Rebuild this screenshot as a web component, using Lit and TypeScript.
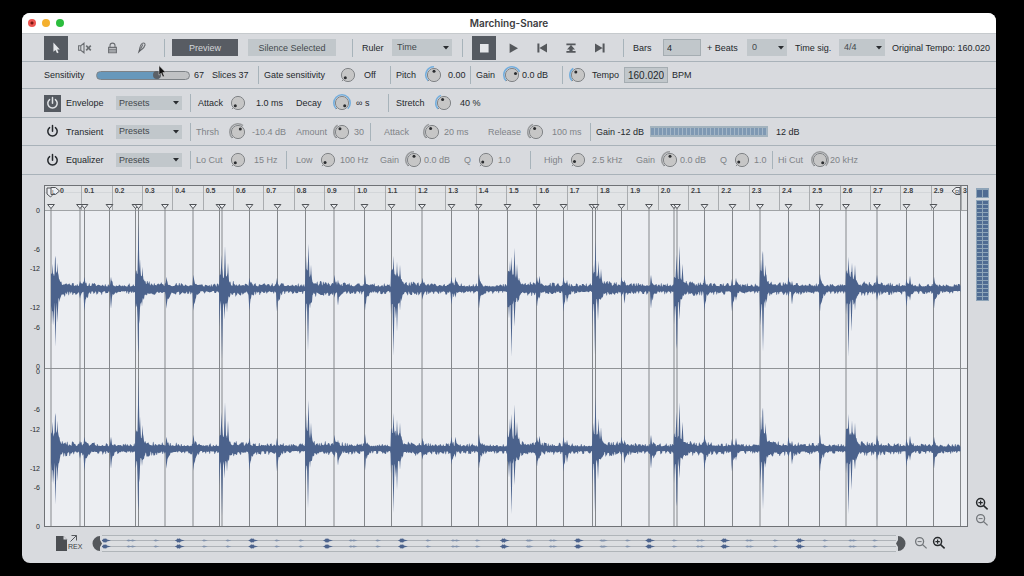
import { LitElement, html, svg, css, unsafeCSS } from "lit";
import { customElement } from "lit/decorators.js";

/* ---------- slice markers and audio shape ---------- */

const SLICES = [
  51, 80, 84.5, 109.5, 135.5, 138.5, 165, 193, 219.5, 222, 249.5, 277.5, 305.5, 334, 364.5, 391.5, 422, 451.5, 478.5,
  507.5, 536.5, 563.5, 592.5, 595.5, 621.5, 649, 674, 677, 704.5, 732.5, 760, 788.5, 819.5, 846, 877, 906.5, 933.5,
];
const SONG_START = 51;
const SONG_END = 960.5;

type Spike = [number, number];
interface Hit {
  at: number;
  len: number;
  body: number;
  up: Spike[];
  down: Spike[];
}

const HITS: Hit[] = [
  { at: 51, len: 9, body: 22, up: [[52.5, 25], [55.3, 39], [57.5, 26]], down: [[52, 36], [53.5, 37], [55.5, 58], [57.5, 34]] },
  { at: 135.5, len: 9, body: 19, up: [[136, 18], [138.5, 66], [140, 30], [142.5, 22]], down: [[135.5, 20], [138.3, 76], [139.5, 31], [142, 18]] },
  { at: 219.5, len: 10, body: 19, up: [[221.5, 34], [225, 43], [228, 26]], down: [[219.5, 38], [222, 70], [224.5, 31], [227, 24]] },
  { at: 305.2, len: 7, body: 21, up: [[306, 33], [308.5, 45], [311, 24]], down: [[305.5, 38], [308, 62], [310, 20]] },
  { at: 391, len: 11, body: 21, up: [[393.5, 33], [397, 27], [400, 24]], down: [[391, 26], [393.5, 67], [395.5, 30], [397, 43], [400, 22]] },
  { at: 507.5, len: 12, body: 19, up: [[510, 28], [511.5, 32], [514.5, 41], [517, 25]], down: [[509, 30], [511.5, 68], [514.5, 38]] },
  { at: 592.5, len: 10, body: 20, up: [[593, 24], [595.5, 48], [598.5, 28], [601, 20]], down: [[592.5, 38], [595, 66], [598, 32]] },
  { at: 674, len: 9, body: 19, up: [[676.5, 34], [679.5, 43], [682.5, 25]], down: [[674, 36], [676.8, 71], [679.5, 31]] },
  { at: 760, len: 7, body: 21, up: [[761, 30], [762.8, 45], [765.5, 24]], down: [[760.5, 37], [763, 63], [765, 20]] },
  { at: 846, len: 11, body: 21, up: [[848.5, 32], [852, 26], [855, 24]], down: [[846, 26], [848.5, 68], [851.5, 43], [855, 22]] },
];

const TAPS: [number, number, number][] = [
  [80, 8, 10], [84.5, 12, 22], [111, 12, 20], [166.5, 12, 20], [193.5, 14, 22], [249.5, 11, 22], [277, 11, 23],
  [334.5, 14, 9], [338, 9, 17], [365, 15, 22], [422.5, 11, 11], [451.5, 12, 16], [455.5, 12, 9], [479, 15, 20],
  [537, 12, 18], [539.5, 13, 10], [563.5, 12, 23], [567, 9, 14], [621.5, 12, 8], [624.5, 9, 15], [651, 14, 20],
  [704.5, 14, 22], [732, 10, 23], [736, 11, 12], [788.5, 12, 8], [792, 8, 16], [820, 15, 23], [877, 14, 12],
  [906.5, 10, 18], [910, 13, 12], [934, 12, 20],
];

function makeNoise(seed: number) {
  let s = seed;
  return () => {
    s = (s * 1664525 + 1013904223) % 4294967296;
    return s / 4294967296;
  };
}

function wavePath(mid: number, seed: number, upGain: number, downGain: number) {
  const rand = makeNoise(seed);
  let held = 0.5;
  const height = (x: number, side: "up" | "down") => {
    if (x % 1 === 0) held = rand();
    const n = held;
    let last = HITS[0];
    for (const h of HITS) if (h.at <= x) last = h;
    const since = x - last.at;
    let a = 2.1 + n * n * 2.6 + 3.2 * Math.exp(-since / 40) * (0.4 + n);
    if (since >= 0 && since <= last.len + 4) {
      const fall = since < last.len ? 1 - 0.35 * (since / last.len) : 0.5 * (1 - (since - last.len) / 4);
      a = Math.max(a, last.body * fall * (0.6 + 0.4 * n));
    }
    for (const [sx, sh] of last[side]) {
      const d = Math.abs(x - sx);
      const g = side === "up" ? upGain : downGain;
      if (d < 1.1) a = Math.max(a, sh * g * (1 - d / 1.3));
    }
    for (const [tx, u, d] of TAPS) {
      const t = x - tx;
      const peak = side === "up" ? u : d;
      if (t > -1 && t <= 0.6) a = Math.max(a, peak * (1 - Math.abs(t) * 0.6));
      else if (t > 0 && t < 9) a = Math.max(a, peak * 0.7 * Math.exp(-t / 5) * (0.55 + 0.6 * n));
    }
    return a;
  };
  const top: string[] = [];
  const bottom: string[] = [];
  for (let x = SONG_START; x <= SONG_END; x += 0.5) {
    top.push(`${x} ${(mid - height(x, "up")).toFixed(1)}`);
  }
  for (let x = SONG_END; x >= SONG_START; x -= 0.5) {
    bottom.push(`${x} ${(mid + height(x, "down")).toFixed(1)}`);
  }
  return `M${top.join("L")}L${bottom.join("L")}Z`;
}

const overviewX = (x: number) => (x - SONG_START) * 0.88;

const overviewHits = (mid: number) =>
  HITS.map((h) => `M${overviewX(h.at) - 1} ${mid}l2-1 1-1.2 1 .8 1-.8 1 1.2 4 1-4 1-1 1.2-1-.8-1 .8-1-1.2z`).join("");

const overviewTaps = (mid: number) => TAPS.map(([t]) => `M${overviewX(t) - 1} ${mid}l2-1 4 1-4 1z`).join("");

/* ---------- cell widths shared by all toolbar rows ---------- */

const CELL_STEPS = [6, 8, 10, 12, 14, 16, 18, 20, 22, 24, 26, 28, 29, 30, 32, 36, 38, 40, 44, 46, 48, 50, 52, 54, 70, 74, 76, 98, 104, 126];
const cellRules = unsafeCSS(CELL_STEPS.map((n) => `.w${n}{width:${n}px}`).join(""));

const txt = (w: number, text: string) => html`<span class="cell w${w}">${text}</span>`;
const sep = (w: number) => html`<span class="cell w${w}"><i class="rule"></i></span>`;

function knob(w: number, id: string, label: string, v: number) {
  const rad = (deg: number) => ((deg - 90) * Math.PI) / 180;
  const angle = -135 + 270 * v;
  const p = (r: number, deg: number) => `${(10 + r * Math.cos(rad(deg))).toFixed(2)} ${(10 + r * Math.sin(rad(deg))).toFixed(2)}`;
  const large = angle + 135 > 180 ? 1 : 0;
  const [cx, cy] = p(3.8, angle).split(" ");
  return html`<span class="cell w${w}">
    <span class="knob">
      <svg viewBox="0 0 20 20" width="20" height="20" aria-hidden="true">
        ${v > 0.12 ? svg`<path class="ring" d="M${p(8.2, -135)}A8.2 8.2 0 ${large} 1 ${p(8.2, angle)}"></path>` : null}
        <circle class="cap" cx="10" cy="10" r="6.6"></circle>
        <path class="tick" d="M${p(7, -135)}L${p(8.6, -135)}"></path>
        <circle class="dot" cx=${cx} cy=${cy} r="1.5"></circle>
      </svg>
      <input id=${id} type="range" min="0" max="100" .value=${String(Math.round(v * 100))} aria-label=${label} />
    </span>
  </span>`;
}

const lab = (w: number, id: string, text: string) => html`<label class="cell w${w}" for=${id}>${text}</label>`;

const picker = (w: number, cls: string, id: string, label: string, options: string[]) => html`<span class="cell w${w}">
  <span class="picker ${cls}">
    <select id=${id} aria-label=${label}>
      ${options.map((o) => html`<option>${o}</option>`)}
    </select>
    <svg viewBox="0 0 6 4" width="6" height="4" aria-hidden="true"><path d="M0 0h6L3 3.6z"></path></svg>
  </span>
</span>`;

const iconButton = (w: number, label: string, on: boolean, icon: unknown) => html`<span class="cell w${w}">
  <button class="tool ${on ? "on" : ""}" aria-label=${label}>
    <svg viewBox="0 0 24 24" width="24" height="24">${icon}</svg>
  </button>
</span>`;

const power = (on: boolean, label: string) => html`<span class="cell w22">
  <button class="power ${on ? "on" : ""}" aria-label=${label}>
    <svg viewBox="0 0 17 17" width="17" height="17">
      <path d="M5.6 4.6a4.7 4.7 0 1 0 5.8 0M8.5 2.6v5.6"></path>
    </svg>
  </button>
</span>`;

const magnifier = (label: string, plus: boolean) => html`<button class="zoom ${plus ? "strong" : ""}" aria-label=${label}>
  <svg viewBox="0 0 14 14" width="14" height="14">
    <circle cx="5.6" cy="5.6" r="4"></circle>
    <path d="M8.6 8.6l4 3.8"></path>
    <path class="sign" d=${plus ? "M3.4 5.6h4.4M5.6 3.4v4.4" : "M3.6 5.6h4"}></path>
  </svg>
</button>`;

@customElement("app-root")
export class AppRoot extends LitElement {
  static styles = css`
    :host {
      display: flex;
      box-sizing: border-box;
      min-height: 100vh;
      padding: 13px 28px 13px 22px;
      background: #000;
      font: 9px/12px "Liberation Sans", Arial, sans-serif;
      color: #24282c;
    }
    *, *::before { box-sizing: border-box; }
    button, input, select { font: inherit; color: inherit; margin: 0; padding: 0; border: 0; border-radius: 0; background: none; }
    svg { display: block; flex: none; }
    .window { flex: 1; min-width: 0; display: flex; flex-direction: column; border-radius: 8px; overflow: hidden; background: #d8dade; }
    .title { display: grid; grid-template-columns: 1fr auto 1fr; align-items: center; height: 20px; padding: 0 6px; background: #fff; }
    .title h1 { margin: 0; font: 600 10px/12px Inter, "Liberation Sans", sans-serif; color: #3c3c3e; }
    .lights { display: flex; gap: 6px; }
    .light { width: 8px; height: 8px; border-radius: 50%; }
    .red { background: radial-gradient(circle, #7c1712 0 1px, #ec5550 2px); }
    .amber { background: #f4b02e; }
    .green { background: #2bbd3d; }

    .row { display: flex; align-items: center; height: 29px; padding-left: 22px; border-bottom: 1px solid #a9b2b9; white-space: nowrap; }
    .row.slim { height: 27px; }
    .row.mid { height: 28px; }
    .row.first { border-top: 1px solid #c6cacd; }
    .cell { flex: none; display: flex; align-items: center; height: 26px; }
    ${cellRules}
    .rule { width: 1px; height: 18px; background: #a7b3ba; }
    .off .cell { color: #7f8387; }
    .off .lead, .off .strong-text { color: #24282c; }
    .end { margin-left: auto; padding-right: 6px; }

    .tool { width: 24px; height: 24px; fill: #55585c; }
    .tool.on { background: #555a61; fill: #e4e6e9; }
    .tool .line { fill: none; stroke: #6b6e72; stroke-width: 1.1; }
    .tool .heavy { stroke-width: 1.6; }
    .power { width: 17px; height: 17px; }
    .power svg { fill: none; stroke: #24282c; stroke-width: 1.5; stroke-linecap: round; }
    .power.on { background: #555a61; }
    .power.on svg { stroke: #e0e3e6; }
    .push { height: 17px; background: #c1c7cb; color: #43474b; text-align: center; }
    .push.on { width: 66px; background: #585c63; color: #d4d6da; }
    .push.wide { width: 88px; }

    .picker { display: grid; align-items: center; height: 17px; background: #c1c7cb; color: #43474b; }
    .picker > * { grid-area: 1 / 1; }
    .picker select { appearance: none; width: 100%; height: 100%; padding-left: 5px; padding-bottom: 1px; }
    .picker svg { justify-self: end; margin-right: 3px; fill: #2a2d31; pointer-events: none; }
    .p40 { width: 40px; }
    .p46 { width: 46px; }
    .p60 { width: 60px; }
    .p66 { width: 66px; height: 14px; }
    .picker.p66 select { padding-left: 3px; }

    .field { width: 38px; height: 17px; padding: 0 3px; background: #c1c7cb; border: 1px solid #a5adb2; }
    .field.tempo { width: 44px; height: 16px; font-size: 10px; }

    .slide { position: relative; display: flex; }
    .slider { appearance: none; width: 94px; height: 9px; border: 1px solid #7d8286; border-radius: 5px;
      background: linear-gradient(90deg, #6798bb var(--level), #c0c2c4 var(--level)); }
    .slider::-webkit-slider-thumb { appearance: none; width: 8px; height: 8px; border-radius: 4px; background: #5b6066; }
    .pointer { position: absolute; left: 62px; top: -6px; pointer-events: none; fill: #111; stroke: #eee; stroke-width: 0.5; }

    .knob { position: relative; width: 20px; height: 20px; }
    .knob input { position: absolute; inset: 0; width: 100%; height: 100%; opacity: 0; }
    .cap { fill: #c6c6c6; stroke: #818487; stroke-width: 1; }
    .ring { fill: none; stroke: #74aedd; stroke-width: 1.6; }
    .off .ring { stroke: #9a9c9e; }
    .tick { stroke: #85888b; stroke-width: 1; }
    .dot { fill: #2b2d30; }

    .gain-meter { width: 118px; height: 11px; border: 1px solid #a3b3be; border-width: 2px 1px;
      background: repeating-linear-gradient(90deg, #7f99b3 0 3px, #a3b6c7 3px 4px); }

    .editor { flex: 1; display: grid; grid-template-columns: 22px 1fr 28px; grid-template-rows: 1fr 36px; padding-top: 10px; }
    .axis { padding-top: 26px; display: grid; grid-template-rows: 1fr 1fr; gap: 5px; font-size: 7px; line-height: 0; text-align: right; }
    .channel { display: grid; grid-template-rows: 2fr 1fr 2fr 1fr 2fr 0; padding-right: 4px; }
    .frame { display: grid; grid-template-rows: 25px 1fr; border: 1px solid #6f7276; background: #eceef2; min-width: 0; }
    .ruler { grid-area: 1 / 1; display: grid; grid-template-columns: repeat(30, minmax(0, 1fr)) 6px; padding-left: 6px;
      background: linear-gradient(#e2e4e6 0 6px, #d3d6d9 6px 7px, #e2e4e6 7px);
      border-bottom: 1px solid #a0a3a6; font-size: 7px; line-height: 9px; font-weight: 700; color: #3d4043; }
    .ruler span { padding-left: 2px; border-left: 1px solid #a9acaf; }
    .ruler span:first-child { padding-left: 8px; border-color: transparent; }
    .ruler .tail { padding-left: 1px; overflow: hidden; }
    .wave { grid-area: 1 / 1 / 3 / 2; width: 100%; height: 100%; }
    .audio { fill: #4b628c; }
    .soft { fill: #8292ab; }
    .split { stroke: #909396; }
    .cut { stroke: #85888c; }
    .flag { fill: #eceef2; stroke: #505357; stroke-width: 1; }
    .flag-text { font: 6px "Liberation Sans", sans-serif; fill: #505357; }

    .side { display: flex; flex-direction: column; align-items: center; padding-top: 3px; }
    .level { fill: #4f6b92; }
    .level-base { fill: #8ea4b8; }
    .level-gap { fill: #d8dade; }
    .side-zoom { margin-top: auto; display: grid; gap: 2px; }
    .zoom { width: 14px; height: 14px; }
    .zoom svg { fill: none; stroke: #72767a; stroke-width: 1.3; }
    .zoom .sign { stroke-width: 1; }
    .zoom.strong svg { stroke: #26292c; stroke-width: 1.5; }
    .zoom.strong .sign { stroke-width: 1.2; }

    .foot { grid-column: 1 / 4; display: flex; align-items: center; height: 32px; padding: 0 50px 0 34px; }
    .rex { display: grid; grid-template-columns: 12px 16px; align-items: end; font-size: 7px; line-height: 8px; color: #3c3f42; text-align: left; }
    .rex svg { fill: #4b4e52; }
    .rex .fold { fill: #d8dade; }
    .rex .out { fill: none; stroke: #55585c; stroke-width: 1; margin: 0 0 1px 2px; }
    .scroll { flex: 1; min-width: 0; height: 17px; margin: 0 8px; display: flex; align-items: center; }
    .grip { fill: #55585c; }
    .track { flex: 1; min-width: 0; height: 17px; border: 1px solid #b0b5b9; border-width: 1px 0; background: #dcdee1; }
    .track svg { width: 100%; height: 100%; }
    .thin { stroke: #a3a8ad; stroke-width: 0.8; }
    .foot-zoom { display: flex; gap: 4px; }
  `;

  private toolbar() {
    return html`<div class="row first">
      ${iconButton(28, "Select", true, svg`<path d="M9.4 6.6v9.2l2.1-1.8 1.5 3.3 1.6-.8-1.5-3.1h2.7z"></path>`)}
      ${iconButton(28, "Mute", false, svg`<path class="line" d="M6.6 9.8h2.2l3.2-2.6v9.6l-3.2-2.6H6.6zM8.8 9.8v4.4"></path><path class="line heavy" d="M14.2 9.6l4.6 4.8M18.8 9.6l-4.6 4.8"></path>`)}
      ${iconButton(28, "Lock", false, svg`<path class="line" d="M8.6 11.4h7.8v5.4H8.6zM10 11.4V9.6a2.5 2.5 0 0 1 5 0v1.8M8.6 13.2h7.8M8.6 15h7.8"></path>`)}
      ${iconButton(28, "Paint", false, svg`<path class="line" d="M14.2 7.4c1.4-1 3.2-.2 2.8 1.6-.5 2-2 3.6-3.6 4.8l-1.8-1.2c.2-2 1-4 2.6-5.2zM14.8 8.4l-2 4"></path><path d="M11.2 12.8l2 1.4-3.4 3.6z"></path>`)}
      ${txt(8, "")} ${sep(8)}
      <span class="cell w76"><button class="push on">Preview</button></span>
      <span class="cell w104"><button class="push wide">Silence Selected</button></span>
      ${sep(10)} ${lab(30, "ruler", "Ruler")} ${picker(70, "p60", "ruler", "Ruler", ["Time", "Beats"])}
      ${sep(10)}
      ${iconButton(29, "Stop", true, svg`<path d="M8 8h8.6v8.6H8z"></path>`)}
      ${iconButton(29, "Play", false, svg`<path d="M8.6 7.4l8.4 4.8-8.4 4.8z"></path>`)}
      ${iconButton(29, "Previous", false, svg`<path d="M7.4 7.6h2v9h-2zM17 7.6v9l-7.6-4.5z"></path>`)}
      ${iconButton(29, "Return to start", false, svg`<path d="M7.4 7.4h9.2v1.8H7.4zM12 9l4 4.6h-2.4V15h3v1.8H7.4V15h3v-1.4H8z"></path>`)}
      ${iconButton(29, "Next", false, svg`<path d="M14.6 7.6h2v9h-2zM7 7.6v9l7.6-4.5z"></path>`)}
      ${txt(6, "")} ${sep(10)} ${lab(30, "bars", "Bars")}
      <span class="cell w44"><input class="field" id="bars" type="text" value="4" /></span>
      ${lab(40, "beats", "+ Beats")} ${picker(48, "p40", "beats", "Beats", ["0", "1", "2", "3"])}
      ${lab(44, "sig", "Time sig.")} ${picker(46, "p46", "sig", "Time signature", ["4/4", "3/4"])}
      <span class="end">Original Tempo: 160.020</span>
    </div>`;
  }

  private globals() {
    return html`<div class="row slim">
      ${lab(52, "sens", "Sensitivity")}
      <span class="cell w98">
        <span class="slide">
          <input class="slider" id="sens" type="range" min="0" max="100" value="67" style="--level:67%" />
          <svg class="pointer" viewBox="0 0 9 13" width="9" height="13" aria-hidden="true">
            <path d="M1 .6v9.6l2.2-2 1.6 3.8 1.6-.7-1.6-3.7h3z"></path>
          </svg>
        </span>
      </span>
      ${txt(18, "67")} ${txt(46, "Slices 37")} ${sep(6)}
      ${lab(74, "gate", "Gate sensitivity")} ${knob(26, "gate", "Gate sensitivity", 0)} ${txt(26, "Off")}
      ${sep(6)} ${lab(28, "pitch", "Pitch")} ${knob(24, "pitch", "Pitch", 0.5)} ${txt(22, "0.00")}
      ${sep(6)} ${lab(26, "gain", "Gain")} ${knob(20, "gain", "Gain", 0.75)} ${txt(40, "0.0 dB")}
      ${sep(6)} ${knob(24, "tempoknob", "Tempo", 0.37)} ${lab(32, "tempo", "Tempo")}
      <span class="cell w48"><input class="field tempo" id="tempo" type="text" value="160.020" /></span>
      ${txt(20, "BPM")}
    </div>`;
  }

  private head(name: string, on: boolean) {
    return html`${power(on, name)}
      <label class="cell w50 lead" for="${name}-preset">${name}</label>
      ${picker(74, "p66", `${name}-preset`, `${name} presets`, ["Presets"])}`;
  }

  private modules() {
    return html`
      <div class="row">
        ${this.head("Envelope", true)} ${sep(8)}
        ${lab(30, "eatk", "Attack")} ${knob(28, "eatk", "Attack", 0)} ${txt(40, "1.0 ms")}
        ${lab(36, "edec", "Decay")} ${knob(24, "edec", "Decay", 1)} ${txt(32, "∞ s")}
        ${sep(8)} ${lab(38, "estr", "Stretch")} ${knob(26, "estr", "Stretch", 0.42)} ${txt(24, "40 %")}
      </div>
      <div class="row mid off">
        ${this.head("Transient", false)} ${sep(6)}
        ${lab(32, "tthr", "Thrsh")} ${knob(24, "tthr", "Threshold", 0.64)} ${txt(44, "-10.4 dB")}
        ${lab(36, "tamt", "Amount")} ${knob(22, "tamt", "Amount", 0.38)} ${txt(16, "30")}
        ${sep(14)} ${lab(38, "tatk", "Attack")} ${knob(22, "tatk", "Attack", 0.42)} ${txt(44, "20 ms")}
        ${lab(38, "trel", "Release")} ${knob(26, "trel", "Release", 0.42)} ${txt(38, "100 ms")}
        ${sep(6)} <span class="cell w54 strong-text">Gain -12 dB</span>
        <span class="cell w126"><span class="gain-meter" role="meter" aria-label="Gain"></span></span>
        <span class="cell strong-text">12 dB</span>
      </div>
      <div class="row off">
        ${this.head("Equalizer", false)} ${sep(6)}
        ${lab(32, "qlc", "Lo Cut")} ${knob(26, "qlc", "Lo Cut", 0)} ${txt(32, "15 Hz")}
        ${sep(10)} ${lab(22, "qlow", "Low")} ${knob(22, "qlow", "Low", 0.02)} ${txt(40, "100 Hz")}
        ${lab(24, "qlg", "Gain")} ${knob(20, "qlg", "Low gain", 0.5)} ${txt(40, "0.0 dB")}
        ${lab(12, "qlq", "Q")} ${knob(22, "qlq", "Low Q", 0.05)} ${txt(32, "1.0")}
        ${sep(14)} ${lab(24, "qhi", "High")} ${knob(24, "qhi", "High", 0.08)} ${txt(44, "2.5 kHz")}
        ${lab(24, "qhg", "Gain")} ${knob(20, "qhg", "High gain", 0.5)} ${txt(40, "0.0 dB")}
        ${lab(12, "qhq", "Q")} ${knob(22, "qhq", "High Q", 0.05)} ${txt(18, "1.0")}
        ${sep(6)} ${lab(32, "qhc", "Hi Cut")} ${knob(20, "qhc", "Hi Cut", 1)} ${txt(30, "20 kHz")}
      </div>`;
  }

  private channelScale() {
    return html`<div class="channel">${["0", "-6", "-12", "-12", "-6", "0"].map((t) => html`<span>${t}</span>`)}</div>`;
  }

  private wave() {
    return html`<svg class="wave" viewBox="45 186 922 340" preserveAspectRatio="none" role="img" aria-label="Waveform">
      <path class="split" d="M45 368.5H967"></path>
      ${[...SLICES, SONG_END].map((x) => svg`<path class="cut" d="M${x} ${x === SONG_END ? 186 : 208}V526"></path>`)}
      <path class="audio" d=${wavePath(288.8, 11, 1, 1)}></path>
      <path class="audio" d=${wavePath(448.7, 47, 1.08, 0.96)}></path>
      ${SLICES.map((x) => svg`<path class="flag" d="M${x - 3.4} 204.5h6.800l-3.400 4z"></path>`)}
      <path class="flag" d="M47 188h5v7.5l-1.500 1.5-3.500-3z"></path>
      <path class="flag" d="M51 187.5h4.5l4 3.5-4 3.500H51z"></path>
      <text class="flag-text" x="52" y="193.5">L</text>
      <path class="flag" d="M960 187.5h-4l-4 3.5 4 3.5h4z"></path>
      <text class="flag-text" x="955" y="193.5">R</text>
    </svg>`;
  }

  private levelMeter() {
    const rows = Array.from({ length: 25 }, (_, i) => 13 + i * 4);
    return html`<svg viewBox="0 0 13 113" width="13" height="113" role="img" aria-label="Output level">
      <rect class="level-base" width="13" height="113"></rect>
      <path class="level-gap" d="M0 10h13v2H0z"></path>
      ${[1, 7].map((x) => svg`<rect class="level" x=${x} y="2" width="5" height="7"></rect>
        ${rows.map((y) => svg`<rect class="level" x=${x} y=${y} width="5" height="3"></rect>`)}`)}
    </svg>`;
  }

  render() {
    const ticks = Array.from({ length: 30 }, (_, i) => (i === 0 ? "0" : (i / 10).toFixed(1)));
    return html`<main class="window">
      <header class="title">
        <div class="lights"><i class="light red"></i><i class="light amber"></i><i class="light green"></i></div>
        <h1>Marching-Snare</h1>
      </header>
      ${this.toolbar()} ${this.globals()} ${this.modules()}
      <section class="editor">
        <div class="axis">${this.channelScale()}${this.channelScale()}</div>
        <div class="frame">
          <div class="ruler">${ticks.map((t) => html`<span>${t}</span>`)}<span class="tail">3</span></div>
          ${this.wave()}
        </div>
        <div class="side">
          ${this.levelMeter()}
          <div class="side-zoom">${magnifier("Zoom in vertically", true)}${magnifier("Zoom out vertically", false)}</div>
        </div>
        <footer class="foot">
          <button class="rex">
            <svg viewBox="0 0 12 15" width="12" height="15"><path d="M0 0h7.5L11 3.5V15H0z"></path><path class="fold" d="M7.5 0v3.5H11z"></path></svg>
            <span>
              <svg class="out" viewBox="0 0 7 7" width="7" height="7"><path d="M.5 6.5l6-6M1.5.5h5v5"></path></svg>REX
            </span>
          </button>
          <div class="scroll">
            <svg class="grip" viewBox="0 0 10 15" width="10" height="15"><path d="M8 0v15A7.5 7.5 0 0 1 8 0zM8 4l2 3.5-2 3.5z"></path></svg>
            <div class="track">
              <svg viewBox="0 0 800 15" preserveAspectRatio="none" aria-hidden="true">
                <path class="thin" d="M0 4.5h800M0 10.5h800"></path>
                <path class="soft" d=${overviewTaps(4.5) + overviewTaps(10.5)}></path>
                <path class="audio" d=${overviewHits(4.5) + overviewHits(10.5)}></path>
              </svg>
            </div>
            <svg class="grip" viewBox="0 0 10 15" width="10" height="15"><path d="M2 0v15A7.5 7.5 0 0 0 2 0zM2 4L0 7.5 2 11z"></path></svg>
          </div>
          <div class="foot-zoom">${magnifier("Zoom out", false)}${magnifier("Zoom in", true)}</div>
        </footer>
      </section>
    </main>`;
  }
}
